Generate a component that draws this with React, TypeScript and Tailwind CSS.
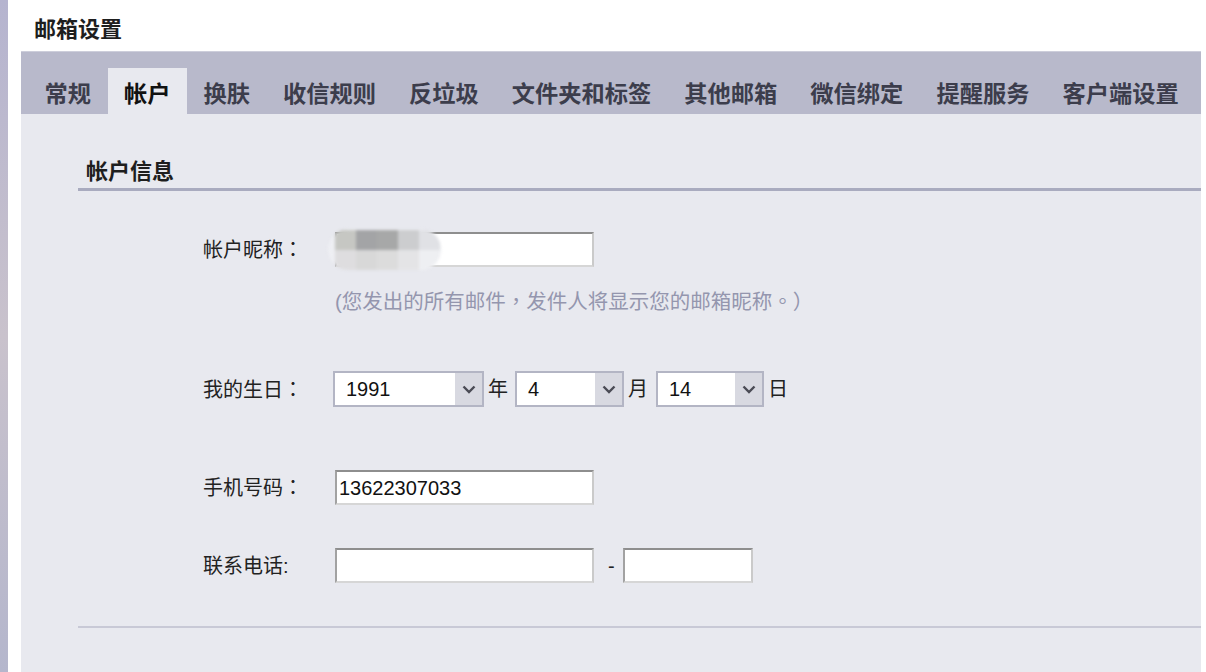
import React from "react";

const FONT = "font-['Liberation_Sans','Noto_Sans_CJK_SC',sans-serif]";
// centred full-width punctuation, as the reference's font draws it
const PUNCT = "font-['Noto_Sans_CJK_TC',sans-serif]";

const tabs = [
  "常规",
  "帐户",
  "换肤",
  "收信规则",
  "反垃圾",
  "文件夹和标签",
  "其他邮箱",
  "微信绑定",
  "提醒服务",
  "客户端设置",
];

// pixelated nickname (mosaic)
const mosaic = [
  ["#c6c7c3", "#a3a4a6", "#a7a8a8", "#cccdcf", "#e0e1e5"],
  ["#dedddf", "#d8d8d8", "#dcdcdc", "#e4e4e6", "#eeeff2"],
];

const TextBox = ({ value, width }: { value?: string; width: string }) => (
  <div
    className={`${width} h-[35px] bg-white border-2 border-t-[#8e8e8e] border-l-[#a2a2a2] border-b-[#d6d6d6] border-r-[#cacaca] flex items-center pl-[2px] text-[20px] text-[#111]`}
  >
    {value}
  </div>
);

const Select = ({ value, width }: { value: string; width: string }) => (
  <div
    className={`${width} h-[36px] bg-white border-2 border-[#b3b5c4] flex items-center`}
  >
    <span className="flex-1 pl-[11px] text-[20px] text-[#111]">{value}</span>
    <span className="w-[27px] h-full bg-[#d8d9e1] flex items-center justify-center">
      <svg width="14" height="9" viewBox="0 0 14 9">
        <path d="M1.5 1.5 L7 7 L12.5 1.5" fill="none" stroke="#4a4b55" strokeWidth="2.4" />
      </svg>
    </span>
  </div>
);

const Label = ({ text, colon = "：" }: { text: string; colon?: string }) => (
  <div className="w-[132px] text-[20px] text-[#222]">
    {text}
    <span className={colon === "：" ? PUNCT : ""}>{colon}</span>
  </div>
);

export default function App() {
  return (
    <div className={`flex w-[1206px] h-[672px] bg-white overflow-hidden ${FONT}`}>
      <div className="w-[8px] h-full bg-gradient-to-b from-[#b5b4cf] via-[#c9c2cc] to-[#b4b6cc]" />
      <div className="w-[13px]" />
      <div className="w-[1180px] flex flex-col">
        <div className="h-[51px] pt-[16px] pl-[13px] text-[22px] leading-[28px] font-bold text-[#1e1e1e]">
          邮箱设置
        </div>

        <div className="h-[63px] bg-[#b8b9cb] border-t border-[#cdcedb] flex items-end pl-[7px]">
          {tabs.map((t) => (
            <div
              key={t}
              className={`h-[46px] px-[16.5px] pt-[11px] text-[23.25px] leading-[30px] font-bold ${
                t === "帐户" ? "bg-[#e8e9ef] text-[#111]" : "text-[#3c3d4c]"
              }`}
            >
              {t}
            </div>
          ))}
        </div>

        <div className="flex-1 bg-[#e8e9ef] pl-[57px]">
          <div className="mt-[44px] pl-[8px] pb-[2px] text-[22px] leading-[28px] font-bold text-[#1e1e1e] border-b-[3px] border-[#a9abbf]">
            帐户信息
          </div>

          <div className="pl-[125px]">
            <div className="mt-[41px] flex items-center">
              <Label text="帐户昵称" />
              <div className="relative">
                <TextBox width="w-[259px]" />
                <div className="absolute left-[-7px] top-[-3px] h-[41px] w-[113px] rounded-full overflow-hidden bg-[#eeeff3] blur-[1.5px] pl-[7px] flex flex-col justify-center">
                  {mosaic.map((row, i) => (
                    <div key={i} className="flex">
                      {row.map((c, j) => (
                        <div key={j} className="w-[21px] h-[20px]" style={{ background: c }} />
                      ))}
                    </div>
                  ))}
                </div>
              </div>
            </div>
            <div className="mt-[19px] ml-[132px] text-[20.5px] leading-[28px] text-[#9496ae]">
              (您发出的所有邮件<span className={PUNCT}>，</span>发件人将显示您的邮箱昵称
              <span className={PUNCT}>。）</span>
            </div>

            <div className="mt-[55px] flex items-center text-[20px] text-[#222]">
              <Label text="我的生日" />
              <div className="-ml-[2px]">
                <Select value="1991" width="w-[151px]" />
              </div>
              <span className="ml-[4px] mr-[7px]">年</span>
              <Select value="4" width="w-[109px]" />
              <span className="ml-[4px] mr-[8px]">月</span>
              <Select value="14" width="w-[108px]" />
              <span className="ml-[4px]">日</span>
            </div>

            <div className="mt-[63px] flex items-center">
              <Label text="手机号码" />
              <TextBox value="13622307033" width="w-[259px]" />
            </div>

            <div className="mt-[43px] flex items-center">
              <Label text="联系电话" colon=":" />
              <TextBox width="w-[259px]" />
              <span className="ml-[14px] mr-[8px] text-[20px] text-[#222]">-</span>
              <TextBox width="w-[130px]" />
            </div>
          </div>

          <div className="mt-[43px] border-t-2 border-[#c8c9d6]" />
        </div>
      </div>
      <div className="w-[5px]" />
    </div>
  );
}
